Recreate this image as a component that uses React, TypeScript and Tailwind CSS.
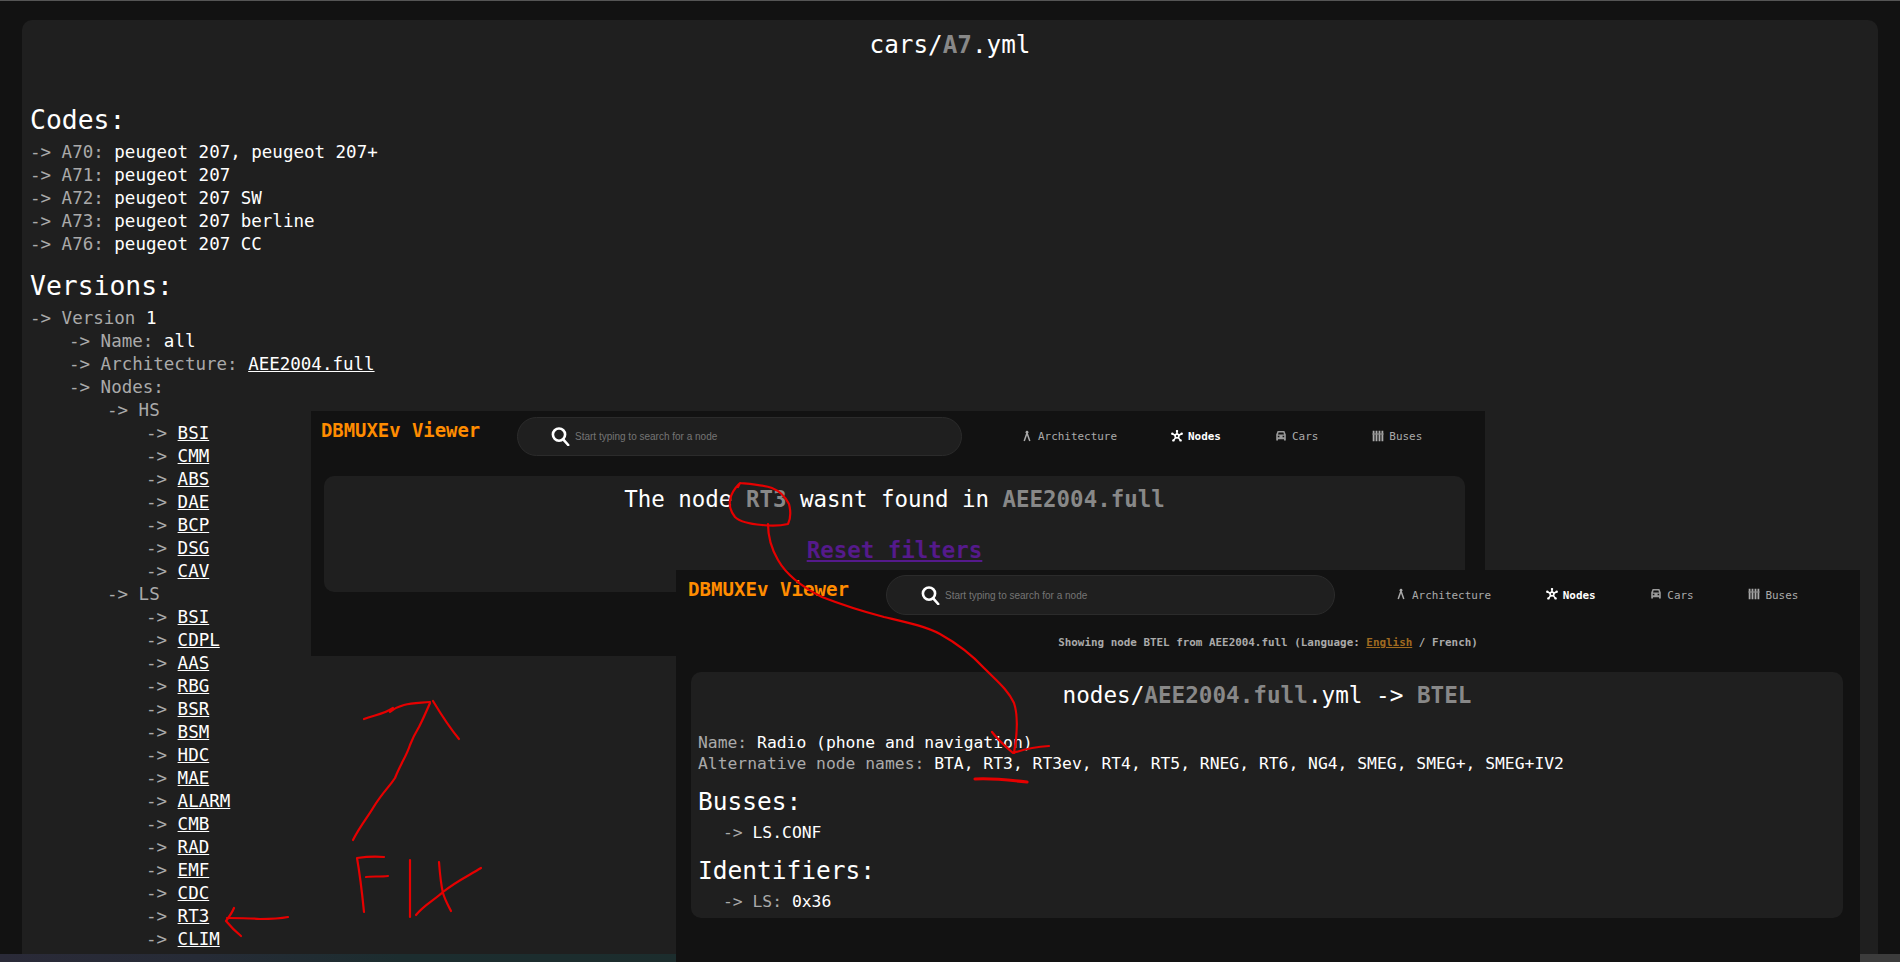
import React from "react";

const mono = "font-['DejaVu_Sans_Mono',monospace]";

function Arch() {
  return (
    <svg width="12" height="12" viewBox="0 0 12 12" fill="none" stroke="#aaaaaa" strokeWidth="1.5" className="shrink-0 -mt-[3px]">
      <path d="M3.2 11 L6 3 L8.8 11" />
      <circle cx="6" cy="2.2" r="1.4" fill="#aaaaaa" stroke="none" />
    </svg>
  );
}
function NodesIcon() {
  return (
    <svg width="12" height="12" viewBox="0 0 12 12" fill="none" stroke="#ffffff" strokeWidth="1.6" className="shrink-0 -mt-[3px]">
      <path d="M6 0.8V4 M1.2 3.8 L4.2 5.2 M10.8 3.8 L7.8 5.2 M2.4 10.6 L4.6 7.6 M9.6 10.6 L7.4 7.6" />
      <circle cx="6" cy="6" r="1.9" />
      <circle cx="6" cy="1.1" r="1.2" fill="#ffffff" stroke="none" />
      <circle cx="1.3" cy="3.8" r="1.2" fill="#ffffff" stroke="none" />
      <circle cx="10.7" cy="3.8" r="1.2" fill="#ffffff" stroke="none" />
      <circle cx="2.4" cy="10.4" r="1.2" fill="#ffffff" stroke="none" />
      <circle cx="9.6" cy="10.4" r="1.2" fill="#ffffff" stroke="none" />
    </svg>
  );
}
function CarIcon() {
  return (
    <svg width="12" height="12" viewBox="0 0 12 12" className="shrink-0 -mt-[3px]">
      <path fill="#9a9a9a" fillRule="evenodd" d="M2.6 1 H9.4 L10.8 4.6 V10.4 H9 V9.2 H3 V10.4 H1.2 V4.6 Z M3.6 2.4 L3 4.6 H9 L8.4 2.4 Z M2.8 5.8 V7.2 H4.4 V5.8 Z M7.6 5.8 V7.2 H9.2 V5.8 Z" />
    </svg>
  );
}
function BusIcon() {
  return (
    <svg width="12" height="12" viewBox="0 0 12 12" fill="none" stroke="#aaaaaa" strokeWidth="1.8" className="shrink-0 -mt-[3px]">
      <path d="M1.6 0.8V11.2 M4.5 0.8V11.2 M7.5 0.8V11.2 M10.4 0.8V11.2" />
      <path d="M0.4 4H11.6" strokeWidth="1.2" stroke="#8a8a8a" />
    </svg>
  );
}

function SearchIcon() {
  return (
    <svg width="20" height="19" viewBox="0 0 20 19" fill="none" stroke="#ffffff" strokeWidth="2.6" className="shrink-0">
      <circle cx="9" cy="7.6" r="6.1" />
      <path d="M13 12.2 L18.2 18" strokeLinecap="round" />
    </svg>
  );
}

function Nav({ wide }: { wide?: boolean }) {
  const item = "flex items-center gap-[5px] text-[10.95px] leading-4 text-[#aaaaaa]";
  return (
    <nav className={wide ? "mt-[1px] flex gap-[54.7px]" : "mt-[1px] flex gap-[54px]"}>
      <span className={item}><Arch />Architecture</span>
      <span className={`${item} !text-white font-bold`}><NodesIcon />Nodes</span>
      <span className={item}><CarIcon />Cars</span>
      <span className={item}><BusIcon />Buses</span>
    </nav>
  );
}

function Search({ boxClass }: { boxClass: string }) {
  return (
    <div className={`${boxClass} flex items-center gap-[5px] rounded-full border border-[#2b2b2b] bg-[#1f1f1f]`}>
      <SearchIcon />
      <span className="font-['Liberation_Sans',sans-serif] text-[10px] text-[#757575]">Start typing to search for a node</span>
    </div>
  );
}

function Row({ depth, label, value, link }: { depth: 0 | 1 | 2 | 3; label?: string; value?: string; link?: boolean }) {
  const ml = ["ml-0", "ml-[39px]", "ml-[77px]", "ml-[116px]"][depth];
  return (
    <div className={`${ml} whitespace-pre text-[#aaaaaa]`}>
      {"-> "}
      {label ? label : null}
      {label && value ? " " : null}
      {value ? <span className={link ? "text-white underline" : "text-white"}>{value}</span> : null}
    </div>
  );
}

const codes: [string, string][] = [
  ["A70:", "peugeot 207, peugeot 207+"],
  ["A71:", "peugeot 207"],
  ["A72:", "peugeot 207 SW"],
  ["A73:", "peugeot 207 berline"],
  ["A76:", "peugeot 207 CC"],
];
const hs = ["BSI", "CMM", "ABS", "DAE", "BCP", "DSG", "CAV"];
const ls = ["BSI", "CDPL", "AAS", "RBG", "BSR", "BSM", "HDC", "MAE", "ALARM", "CMB", "RAD", "EMF", "CDC", "RT3", "CLIM"];

function Annotations() {
  return (
    <svg width="1900" height="962" viewBox="0 0 1900 962" fill="none" stroke="#e60000" strokeWidth="2.2" strokeLinecap="round" strokeLinejoin="round" className="absolute left-0 top-0">
      <path d="M738 487 L740 483 C750 484 764 485 772 488 C782 492 786 498 789 504 C791 512 790 520 788 524 C780 526 770 526 762 525 C750 524 740 522 735 517 C731 512 729 506 730 500 C731 494 734 489 739 484" />
      <path d="M768 524 C768 536 771 548 778 560 C786 574 800 586 822 597 C845 606 865 612 884 617 C905 622 925 626 940 634 C958 644 972 655 984 668 C998 682 1008 690 1014 703 C1018 715 1018 730 1014 753" />
      <path d="M992 732 C998 740 1006 747 1013 753 C1022 750 1034 747 1049 746" />
      <path d="M975 779 C990 778 1010 780 1027 782" strokeWidth="3.2" />
      <path d="M353 840 C360 826 367 818 373 808 C382 793 390 786 395 778 C400 765 407 755 410 745 C414 735 416 732 419 727 C424 717 427 710 430 703" />
      <path d="M364 719 C375 715 384 714 393 708 M390 712 C395 708 400 706 404 705 C412 703 420 703 430 702" />
      <path d="M433 701 C442 716 450 728 459 739" />
      <path d="M364 912 C362 892 360 875 357 858 C364 857 374 856 384 857" />
      <path d="M366 877 C372 876 380 877 388 876" />
      <path d="M410 860 L410 917" />
      <path d="M439 862 C440 875 441 885 443 893 C445 900 448 905 451 911" />
      <path d="M416 915 C424 905 433 901 443 892 C455 882 468 876 481 868" />
      <path d="M288 917 C278 919 268 919 260 919 C248 918 238 918 227 918" />
      <path d="M234 908 C232 913 229 917 226 921 C231 927 236 932 241 936" />
    </svg>
  );
}

export default function App() {
  return (
    <div className={`relative h-[962px] w-[1900px] overflow-hidden bg-[#121212] ${mono}`}>
      <div className="h-px bg-[#555555]" />
      <div className="h-[953px] px-[22px] pt-[19px]">
        <main className="h-[934px] overflow-hidden rounded-t-[10px] bg-[#1f1f1f] px-[8px] text-[17.5px] leading-[23px]">
          <h1 className="pt-px text-center text-[24.3px] leading-[48px] text-white">
            cars/<span className="font-bold text-[#888888]">A7</span>.yml
          </h1>
          <h2 className="mt-[36px] text-[26.4px] leading-[30px] text-white">Codes:</h2>
          <div className="mt-[6px]">
            {codes.map(([a, b]) => (
              <Row key={a} depth={0} label={a} value={b} />
            ))}
          </div>
          <h2 className="mt-[15px] text-[26.4px] leading-[30px] text-white">Versions:</h2>
          <div className="mt-[6px]">
            <Row depth={0} label="Version" value="1" />
            <Row depth={1} label="Name:" value="all" />
            <Row depth={1} label="Architecture:" value="AEE2004.full" link />
            <Row depth={1} label="Nodes:" />
            <Row depth={2} label="HS" />
            {hs.map((n) => (
              <Row key={"hs" + n} depth={3} value={n} link />
            ))}
            <Row depth={2} label="LS" />
            {ls.map((n) => (
              <Row key={"ls" + n} depth={3} value={n} link />
            ))}
          </div>
        </main>
      </div>
      <div className="flex h-2">
        <div className="w-[1860px] bg-[linear-gradient(90deg,#2a2a38_0px,#262b36_200px,#1c2d2f_400px,#1c2d2d_700px)]" />
        <div className="flex-1 bg-[#3c3c3c]" />
      </div>

      {/* First pasted window */}
      <section className="absolute left-[311px] top-[411px] h-[245px] w-[1174px] bg-[#121212]">
        <header className="flex h-[65px] items-start">
          <div className="mt-[7px] w-[206px] pl-[10px] text-[18.9px] font-bold leading-[24px] text-[#ff8c00]">DBMUXEv Viewer</div>
          <div className="mt-[6px] flex h-[39px] items-center">
            <Search boxClass="h-[39px] w-[445px] pl-[32px]" />
            <div className="ml-[59px]"><Nav /></div>
          </div>
        </header>
        <div className="ml-[13px] h-[116px] w-[1141px] rounded-[10px] bg-[#1f1f1f] pt-2 text-center text-[22.45px] leading-[30px] text-white">
          <div>
            The node <span className="font-bold text-[#888888]">RT3</span> wasnt found in{" "}
            <span className="font-bold text-[#888888]">AEE2004.full</span>
          </div>
          <div className="mt-[21px] font-bold text-[#551a8b] underline">Reset filters</div>
        </div>
      </section>

      {/* Second pasted window */}
      <section className="absolute left-[676px] top-[570px] h-[392px] w-[1184px] bg-[#121212]">
        <header className="flex h-[50px] items-start">
          <div className="mt-[8px] w-[210px] pl-[12px] text-[19.1px] font-bold leading-[24px] text-[#ff8c00]">DBMUXEv Viewer</div>
          <div className="mt-[5px] flex h-[40px] items-center">
            <Search boxClass="h-[40px] w-[449px] pl-[33px]" />
            <div className="ml-[60px]"><Nav wide /></div>
          </div>
        </header>
        <div className="mt-[15px] text-center text-[10.9px] font-bold leading-4 text-[#aaaaaa]">
          Showing node BTEL from AEE2004.full (Language: <span className="text-[#a06a20] underline">English</span> / French)
        </div>
        <div className="ml-[15px] mt-[21px] h-[246px] w-[1152px] rounded-[10px] bg-[#1f1f1f] px-[7px] pt-[8px] text-[16.35px] leading-[21px] text-white">
          <h3 className="text-center text-[22.65px] leading-[30px]">
            nodes/<span className="font-bold text-[#888888]">AEE2004.full</span>.yml -&gt; <span className="font-bold text-[#888888]">BTEL</span>
          </h3>
          <div className="mt-[22px]"><span className="text-[#aaaaaa]">Name:</span> Radio (phone and navigation)</div>
          <div><span className="text-[#aaaaaa]">Alternative node names:</span> BTA, RT3, RT3ev, RT4, RT5, RNEG, RT6, NG4, SMEG, SMEG+, SMEG+IV2</div>
          <h4 className="mt-[14px] text-[24.5px] leading-[28px]">Busses:</h4>
          <div className="ml-[25px] mt-[6px]"><span className="text-[#aaaaaa]">-&gt;</span> LS.CONF</div>
          <h4 className="mt-[14px] text-[24.5px] leading-[28px]">Identifiers:</h4>
          <div className="ml-[25px] mt-[6px]"><span className="text-[#aaaaaa]">-&gt; LS:</span> 0x36</div>
        </div>
      </section>

      <Annotations />
    </div>
  );
}
